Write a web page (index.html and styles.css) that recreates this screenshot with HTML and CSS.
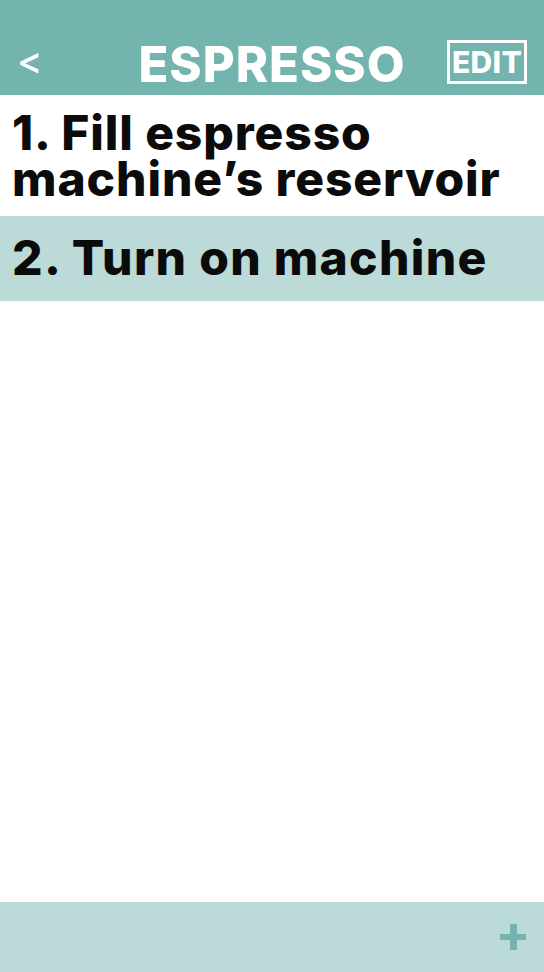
FILE: index.html
```html
<!DOCTYPE html>
<html>
<head>
<meta charset="utf-8">
<link rel="stylesheet" href="styles.css">
</head>
<body>
<div class="app">
  <header class="topbar">
    <span class="back">&lt;</span>
    <h1 class="title">ESPRESSO</h1>
    <span class="edit">EDIT</span>
  </header>
  <ul class="steps">
    <li class="step">1. Fill espresso machine’s reservoir</li>
    <li class="step active">2. Turn on machine</li>
  </ul>
  <footer class="bottombar">
    <span class="plus"></span>
  </footer>
</div>
</body>
</html>
```
FILE: styles.css
```css
html, body {
  margin: 0;
  padding: 0;
  background: #ffffff;
}
.app {
  width: 544px;
  height: 972px;
  display: flex;
  flex-direction: column;
  font-family: "Inter", "Liberation Sans", sans-serif;
}
.topbar {
  height: 95px;
  background: #73b5ae;
  display: flex;
  align-items: flex-end;
  justify-content: space-between;
  padding: 0 17px 11px 17px;
  box-sizing: border-box;
  color: #ffffff;
  position: relative;
}
.back {
  font-size: 38px;
  font-weight: 500;
  line-height: 1;
  padding-bottom: 5px;
  width: 40px;
}
.title {
  margin: 0;
  font-size: 49px;
  font-weight: 800;
  line-height: 1;
  letter-spacing: 1px;
  position: absolute;
  left: 0;
  right: 0;
  text-align: center;
  bottom: 6px;
}
.edit {
  border: 3px solid #ffffff;
  font-size: 30px;
  font-weight: 800;
  line-height: 38px;
  padding: 0 2px;
  letter-spacing: 0.3px;
  position: relative;
}
.steps {
  list-style: none;
  margin: 0;
  padding: 0;
  flex: 1;
}
.step {
  font-size: 48px;
  font-weight: 800;
  line-height: 46px;
  letter-spacing: 0.9px;
  color: #0b0b0b;
  padding: 15px 12px 14px;
}
.step.active {
  background: #bbdad8;
  padding: 19px 12px 20px;
  letter-spacing: 1.3px;
}
.bottombar {
  height: 70px;
  background: #bbdad8;
  display: flex;
  justify-content: flex-end;
  align-items: center;
  padding-right: 18px;
}
.plus {
  width: 26px;
  height: 26px;
  background:
    linear-gradient(#73b5ae, #73b5ae) center / 26px 6px no-repeat,
    linear-gradient(#73b5ae, #73b5ae) center / 7px 26px no-repeat;
}
```
